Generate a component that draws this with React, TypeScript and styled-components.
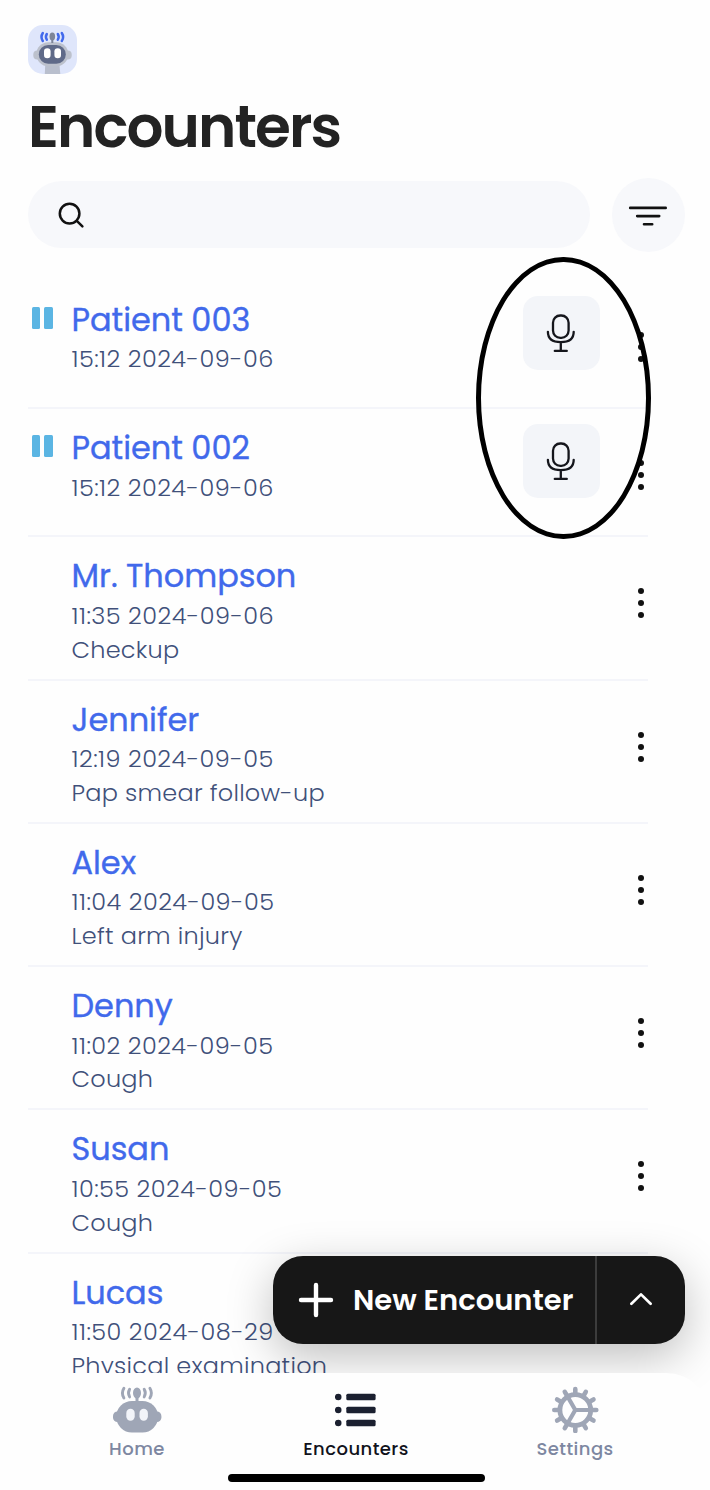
import React from "react";
import styled, { createGlobalStyle } from "styled-components";

const GlobalStyle = createGlobalStyle`
  * { box-sizing: border-box; }
  body {
    margin: 0;
    background: #fefefe;
    font-family: Poppins, Inter, "Open Sans", sans-serif;
    overflow: hidden;
  }
  button { font: inherit; border: 0; padding: 0; margin: 0; }
  svg { display: block; }
`;

const Screen = styled.div`
  position: relative;
  width: 710px;
  height: 1490px;
  overflow: hidden;
  display: flex;
  flex-direction: column;
  background: #fefefe;
`;

const Header = styled.header`
  padding: 25px 25px 0 28px;
`;

const Title = styled.h1`
  margin: 17.5px 0 0;
  color: #232323;
  font-size: 58px;
  line-height: 70px;
  font-weight: 600;
  letter-spacing: -1.9px;
`;

const SearchRow = styled.div`
  display: flex;
  align-items: center;
  justify-content: space-between;
  height: 74px;
  margin: 16.2px 25px 0 28px;
`;

const SearchField = styled.div`
  display: flex;
  align-items: center;
  width: 561.5px;
  height: 66.5px;
  padding-left: 30px;
  border-radius: 34px;
  background: #f7f8fb;
`;

const FilterButton = styled.button`
  display: grid;
  place-items: center;
  width: 73.5px;
  height: 74px;
  padding-top: 2.5px;
  border-radius: 50%;
  background: #f7f8fb;
`;

const List = styled.main`
  padding: 29.3px 0 0 28px;
  width: 648px;
`;

const Row = styled.article<{ $tall: boolean }>`
  display: grid;
  grid-template-columns: 43.5px 1fr 77px 48px;
  height: ${(p) => (p.$tall ? 143.25 : 128.25)}px;
  border-bottom: 2px solid #f4f5fa;
`;

const Status = styled.div`
  padding: 26px 0 0 4px;
`;

const PauseMark = styled.div`
  display: flex;
  justify-content: space-between;
  width: 20.5px;
  height: 22px;
  &::before,
  &::after {
    content: "";
    width: 8.4px;
    border-radius: 1.5px;
    background: #5bb5e3;
  }
`;

const Details = styled.div`
  padding-top: 18.8px;
  white-space: nowrap;
`;

const Name = styled.div`
  color: #4169eb;
  font-size: 32px;
  line-height: 40px;
  font-weight: 400;
  letter-spacing: -0.04px;
  -webkit-text-stroke: 0.35px #4169eb;
`;

const Meta = styled.div<{ $tracking: number }>`
  color: #40507a;
  font-size: 24px;
  line-height: 33.7px;
  font-weight: 300;
  letter-spacing: ${(p) => p.$tracking}px;
`;

const Lines = styled.div`
  margin-top: 2.7px;
`;

const MicButton = styled.button`
  display: grid;
  place-items: center;
  width: 76.6px;
  height: 73.7px;
  margin-top: 15px;
  border-radius: 15px;
  background: #f3f5f9;
`;

const MoreButton = styled.button`
  display: flex;
  flex-direction: column;
  align-items: center;
  gap: 6px;
  width: 14px;
  height: 30px;
  margin: 51px 0 0 34px;
  background: none;
`;

const Dot = styled.i`
  width: 6px;
  height: 6px;
  border-radius: 50%;
  background: #111;
`;

const Annotation = styled.div`
  position: absolute;
  left: 476.3px;
  top: 257.4px;
  width: 174.4px;
  height: 282px;
  border: 5px solid #000;
  border-radius: 50%;
  pointer-events: none;
`;

const NewEncounter = styled.div`
  position: absolute;
  right: 25px;
  bottom: 146px;
  display: flex;
  width: 412.5px;
  height: 88px;
  border-radius: 30px;
  background: #171717;
  color: #fff;
  box-shadow: 0 13px 46px rgba(0, 0, 0, 0.25);
`;

const CreateButton = styled.button`
  display: flex;
  align-items: center;
  gap: 19px;
  width: 324px;
  padding-left: 25.5px;
  border-right: 2px solid #3c3c3c;
  background: none;
  color: inherit;
  font-size: 29px;
  font-weight: 600;
  white-space: nowrap;
`;

const ExpandButton = styled.button`
  display: grid;
  place-items: center;
  flex: 1;
  background: none;
`;

const TabBar = styled.nav`
  position: absolute;
  inset: auto 0 0 0;
  display: flex;
  justify-content: center;
  height: 117px;
  padding: 12px 0 0 2px;
  border-radius: 44px 44px 0 0;
  background: #fefefe;
`;

const Tab = styled.button<{ $active?: boolean }>`
  display: flex;
  flex-direction: column;
  align-items: center;
  width: 219px;
  gap: 4px;
  background: none;
  color: ${(p) => (p.$active ? "#11131c" : "#7d87a1")};
  font-size: 18px;
  line-height: 24px;
  font-weight: 500;
  letter-spacing: 0.45px;
`;

const HomeIndicator = styled.div`
  position: absolute;
  left: 228px;
  bottom: 8px;
  width: 256.5px;
  height: 8px;
  border-radius: 4px;
  background: #000;
`;

const Logo = () => (
  <svg width="49" height="49" viewBox="0 0 49 49">
    <defs>
      <clipPath id="tile"><rect width="49" height="49" rx="15" /></clipPath>
    </defs>
    <g clipPath="url(#tile)">
      <rect width="49" height="49" fill="#dfe6fb" />
      <path d="M17.3 38h14l1 11H16.8z" fill="#b9bfcd" />
      <rect x="5.3" y="25.5" width="38.4" height="9" rx="4" fill="#bcc1cc" />
      <rect x="8.3" y="17.3" width="32" height="24" rx="12" fill="#bcc1cc" />
      <rect x="10.8" y="20" width="27" height="18.8" rx="9.4" fill="#5f6a88" />
      <rect x="16" y="23.2" width="6.6" height="10" rx="3.3" fill="#fff" />
      <rect x="26.4" y="23.2" width="6.6" height="10" rx="3.3" fill="#fff" />
      <path d="M24.3 12v6" stroke="#7d8598" strokeWidth="2" />
      <ellipse cx="24.3" cy="11.6" rx="2.8" ry="4" fill="#7d8598" />
      <g fill="none" stroke="#4169ec" strokeWidth="2.5" strokeLinecap="round">
        <path d="M18.8 9q-1.8 2.8 0 5.6M14.8 8q-2.6 4 0 8M29.8 9q1.8 2.8 0 5.6M33.8 8q2.6 4 0 8" />
      </g>
    </g>
  </svg>
);

const SearchIcon = () => (
  <svg width="30" height="30" viewBox="0 0 30 30" fill="none" stroke="#111" strokeWidth="2.5" strokeLinecap="round">
    <circle cx="11.6" cy="13.6" r="9.8" />
    <path d="M18.8 20.8l5.6 5.6" />
  </svg>
);

const FilterIcon = () => (
  <svg width="40" height="20" viewBox="0 0 40 20" stroke="#111" strokeWidth="2.6" strokeLinecap="round">
    <path d="M2.2 1.9h35.5M9.2 10.1h22M16 18.3h8.2" />
  </svg>
);

const MicIcon = () => (
  <svg width="30" height="40" viewBox="0 0 30 40" fill="none" stroke="#15161c" strokeWidth="2.3" strokeLinecap="round">
    <rect x="7" y="2.5" width="15.6" height="22.3" rx="7.2" />
    <path d="M1.9 18.8c0 7.2 5 10.4 12.9 10.4s12.9-3.2 12.9-10.4M14.8 29.2v8.3M8.8 37.9h12" />
  </svg>
);

const PlusIcon = () => (
  <svg width="36" height="36" viewBox="0 0 36 36" stroke="#fff" strokeWidth="4.4" strokeLinecap="round">
    <path d="M18 3v30M3 18h30" />
  </svg>
);

const ChevronIcon = () => (
  <svg width="24" height="14" viewBox="0 0 24 14" fill="none" stroke="#fff" strokeWidth="2.7" strokeLinecap="round" strokeLinejoin="round">
    <path d="M2.4 10.7L12 1.4l9.6 9.3" />
  </svg>
);

const RobotIcon = () => (
  <svg width="50" height="48" viewBox="0 0 50 48" fill="#9fa6b6">
    <rect x="1" y="26.5" width="48.4" height="10.5" rx="4.5" />
    <rect x="4.3" y="16" width="41.8" height="31.5" rx="15.7" />
    <ellipse cx="25" cy="8" rx="4" ry="5.6" />
    <path d="M23.5 10h3v8h-3z" />
    <rect x="14.3" y="23.8" width="8.4" height="12" rx="4.2" fill="#f2f4f9" />
    <rect x="27.5" y="23.8" width="8.4" height="12" rx="4.2" fill="#f2f4f9" />
    <g fill="none" stroke="#9fa6b6" strokeWidth="2.9" strokeLinecap="round">
      <path d="M17.6 4.3q-2.2 3.7 0 7.6M11.9 3.2q-3 4.9 0 9.8M32.2 4.3q2.2 3.7 0 7.6M37.9 3.2q3 4.9 0 9.8" />
    </g>
  </svg>
);

const ListIcon = () => (
  <svg width="42" height="48" viewBox="0 0 42 48" fill="#1b2030">
    {[12, 25, 38].map((y) => (
      <g key={y}>
        <circle cx="3.2" cy={y} r="3.3" />
        <rect x="11.3" y={y - 3.3} width="29.3" height="6.6" rx="1.5" />
      </g>
    ))}
  </svg>
);

const GearIcon = () => (
  <svg width="48" height="48" viewBox="-24.3 -25 48 48" fill="none" stroke="#9fa6b6" strokeLinecap="round">
    <circle r="15.4" strokeWidth="4.8" />
    {Array.from({ length: 12 }, (_, i) => (
      <path key={i} d="M17.5 0h3.5" strokeWidth="4.6" transform={`rotate(${i * 30})`} />
    ))}
    {[0, 120, 240].map((a) => (
      <path key={a} d="M0 0h15" strokeWidth="4.2" transform={`rotate(${a})`} />
    ))}
  </svg>
);

interface Encounter {
  name: string;
  time: string;
  note?: string;
}

const encounters: Encounter[] = [
  { name: "Patient 003", time: "15:12 2024-09-06" },
  { name: "Patient 002", time: "15:12 2024-09-06" },
  { name: "Mr. Thompson", time: "11:35 2024-09-06", note: "Checkup" },
  { name: "Jennifer", time: "12:19 2024-09-05", note: "Pap smear follow-up" },
  { name: "Alex", time: "11:04 2024-09-05", note: "Left arm injury" },
  { name: "Denny", time: "11:02 2024-09-05", note: "Cough" },
  { name: "Susan", time: "10:55 2024-09-05", note: "Cough" },
  { name: "Lucas", time: "11:50 2024-08-29", note: "Physical examination" },
];

export default function App() {
  return (
    <Screen>
      <GlobalStyle />
      <Header>
        <Logo />
        <Title>Encounters</Title>
      </Header>
      <SearchRow>
        <SearchField><SearchIcon /></SearchField>
        <FilterButton aria-label="Filter"><FilterIcon /></FilterButton>
      </SearchRow>
      <List>
        {encounters.map(({ name, time, note }) => (
          <Row key={name} $tall={!!note}>
            <Status>{!note && <PauseMark />}</Status>
            <Details>
              <Name>{name}</Name>
              <Lines>
                <Meta $tracking={0.45}>{time}</Meta>
                {note && <Meta $tracking={0.25}>{note}</Meta>}
              </Lines>
            </Details>
            {note ? <span /> : <MicButton aria-label="Record"><MicIcon /></MicButton>}
            <MoreButton aria-label="More"><Dot /><Dot /><Dot /></MoreButton>
          </Row>
        ))}
      </List>
      <Annotation />
      <NewEncounter>
        <CreateButton><PlusIcon />New Encounter</CreateButton>
        <ExpandButton aria-label="Expand"><ChevronIcon /></ExpandButton>
      </NewEncounter>
      <TabBar>
        <Tab><RobotIcon />Home</Tab>
        <Tab $active><ListIcon />Encounters</Tab>
        <Tab><GearIcon />Settings</Tab>
      </TabBar>
      <HomeIndicator />
    </Screen>
  );
}
